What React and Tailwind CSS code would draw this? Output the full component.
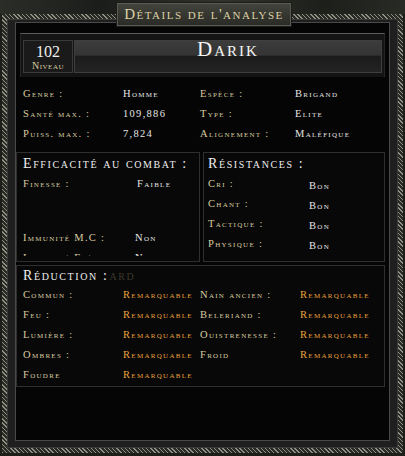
import React from 'react';

const sc = "[font-variant-caps:small-caps]";

const info = [
  ['Genre :', 'Homme', 'Espèce :', 'Brigand'],
  ['Santé max. :', '109,886', 'Type :', 'Elite'],
  ['Puiss. max. :', '7,824', 'Alignement :', 'Maléfique'],
];

const resistances = ['Cri :', 'Chant :', 'Tactique :', 'Physique :'];

const reduction = [
  ['Commun :', 'Nain ancien :'],
  ['Feu :', 'Beleriand :'],
  ['Lumière :', 'Ouistrenesse :'],
  ['Ombres :', 'Froid'],
  ['Foudre', null],
];

const App = () => {
  return (
    <div className={`relative w-[405px] h-[456px] overflow-hidden bg-[#1c1e17] font-['Liberation_Serif',serif] ${sc}`}>
      {/* scenery strip behind the window */}
      <div className="h-[14px] bg-[linear-gradient(to_right,#2b2d29,#1b1d1a_25%,#30322d_55%,#1d1f1b_80%,#282a25)]" />

      {/* ornate outer frame */}
      <div className="mx-[2px] h-[439px] p-[5px] bg-[repeating-linear-gradient(45deg,#8e8e85_0px,#8e8e85_1px,#2a2a25_1px,#2a2a25_3px)]">
        <div className="h-full bg-[#1f1f1f] border border-[#3a3a3a] px-[7px] pt-[2px] pb-[6px]">
          <div className="h-full flex flex-col bg-[#050505] border border-[#4a4a4a]">

            {/* name header */}
            <div className="mx-[4px] mt-[10px] border-t border-[#5c5c5c] border-x border-x-[#262626] bg-[#141414] px-[2px] pt-[6px] pb-[4px] flex gap-[1px]">
              <div className="w-[50px] h-[33px] flex flex-col items-center bg-[#1a1a1a] border border-[#3a3a3a] pt-[4px]">
                <span className="text-[16px] leading-[14px] text-[#f0f0f0]">102</span>
                <span className="mt-[2px] text-[10px] leading-[10px] tracking-[0.5px] text-[#d8cca0]">Niveau</span>
              </div>
              <div className="flex-1 h-[33px] border border-[#3f3f3f] bg-[linear-gradient(to_bottom,#3c3c3c_0%,#343434_45%,#1b1b1b_50%,#242424_100%)] flex justify-center">
                <span className="text-[21px] leading-[16px] tracking-[2px] text-[#f6f6f6]">Darik</span>
              </div>
            </div>

            {/* general info */}
            <div className="mt-[7px] pl-[7px] grid grid-cols-[100px_77px_95px_1fr] auto-rows-[20px] text-[10.5px] leading-[20px] tracking-[1.3px]">
              {info.map((r) => (
                <React.Fragment key={r[0]}>
                  <span className="text-[#d8cca0]">{r[0]}</span>
                  <span className="text-[#e6e6e6]">{r[1]}</span>
                  <span className="text-[#d8cca0]">{r[2]}</span>
                  <span className="text-[#e6e6e6]">{r[3]}</span>
                </React.Fragment>
              ))}
            </div>

            {/* combat + resistances */}
            <div className="mt-[8px] flex gap-[3px]">
              <div className="w-[184px] h-[110px] overflow-hidden border border-[#2f2f2f] bg-[#080808] pl-[6px] pt-[2px]">
                <div className="text-[14px] leading-[18px] tracking-[1.6px] text-[#efefef]">Efficacité au combat :</div>
                <div className="mt-[1px] grid grid-cols-[114px_1fr] text-[10.5px] leading-[20px] tracking-[1.3px]">
                  <span className="text-[#d8cca0]">Finesse :</span>
                  <span className="text-[#e6e6e6]">Faible</span>
                </div>
                <div className="mt-[34px] grid grid-cols-[112px_1fr] text-[10.5px] leading-[20px] tracking-[1.3px]">
                  <span className="text-[#d8cca0]">Immunité M.C :</span>
                  <span className="text-[#e6e6e6]">Non</span>
                </div>
                <div className="mt-[6px] h-[2px] overflow-hidden grid grid-cols-[112px_1fr] text-[10.5px] leading-[8px] tracking-[1.3px]">
                  <span className="text-[#d8cca0]">Immunité Fléau :</span>
                  <span className="text-[#e6e6e6]">Non</span>
                </div>
              </div>

              <div className="w-[182px] h-[110px] border border-[#2f2f2f] bg-[#080808] pl-[4px] pt-[2px]">
                <div className="text-[14px] leading-[18px] tracking-[1.6px] text-[#efefef]">Résistances :</div>
                <div className="mt-[1px] grid grid-cols-[101px_1fr] auto-rows-[20px] text-[10.5px] leading-[20px] tracking-[1.3px]">
                  {resistances.map((r) => (
                    <React.Fragment key={r}>
                      <span className="text-[#d8cca0]">{r}</span>
                      <span className="pt-[2px] text-[#e6e6e6]">Bon</span>
                    </React.Fragment>
                  ))}
                </div>
              </div>
            </div>

            {/* reduction */}
            <div className="mt-[3px] w-[369px] h-[122px] border border-[#2f2f2f] bg-[#080808] pl-[6px]">
              <div className="text-[14px] leading-[19px] tracking-[1.6px] text-[#efefef]">
                Réduction :<span className="ml-[1px] text-[#3a382a]">ard</span>
              </div>
              <div className="grid grid-cols-[100px_77px_100px_1fr] auto-rows-[20px] text-[10.5px] leading-[20px] tracking-[1.3px]">
                {reduction.map((r) => (
                  <React.Fragment key={r[0]}>
                    <span className="text-[#d8cca0]">{r[0]}</span>
                    <span className="text-[#e8a23c]">Remarquable</span>
                    <span className="text-[#d8cca0]">{r[1]}</span>
                    <span className="text-[#e8a23c]">{r[1] ? 'Remarquable' : ''}</span>
                  </React.Fragment>
                ))}
              </div>
            </div>
          </div>
        </div>
      </div>

      {/* title tab */}
      <div className="absolute left-[116px] top-[2px] w-[176px] h-[25px] border border-[#1c1c1a] bg-[linear-gradient(to_bottom,#45453f,#34342f_60%,#2a2a26)] shadow-[inset_0_0_0_1px_#5a5a52] flex items-center justify-center">
        <span className="text-[15px] leading-[15px] tracking-[1.5px] text-[#dcd1a4]">Détails de l'analyse</span>
      </div>
    </div>
  );
};

export default App;
